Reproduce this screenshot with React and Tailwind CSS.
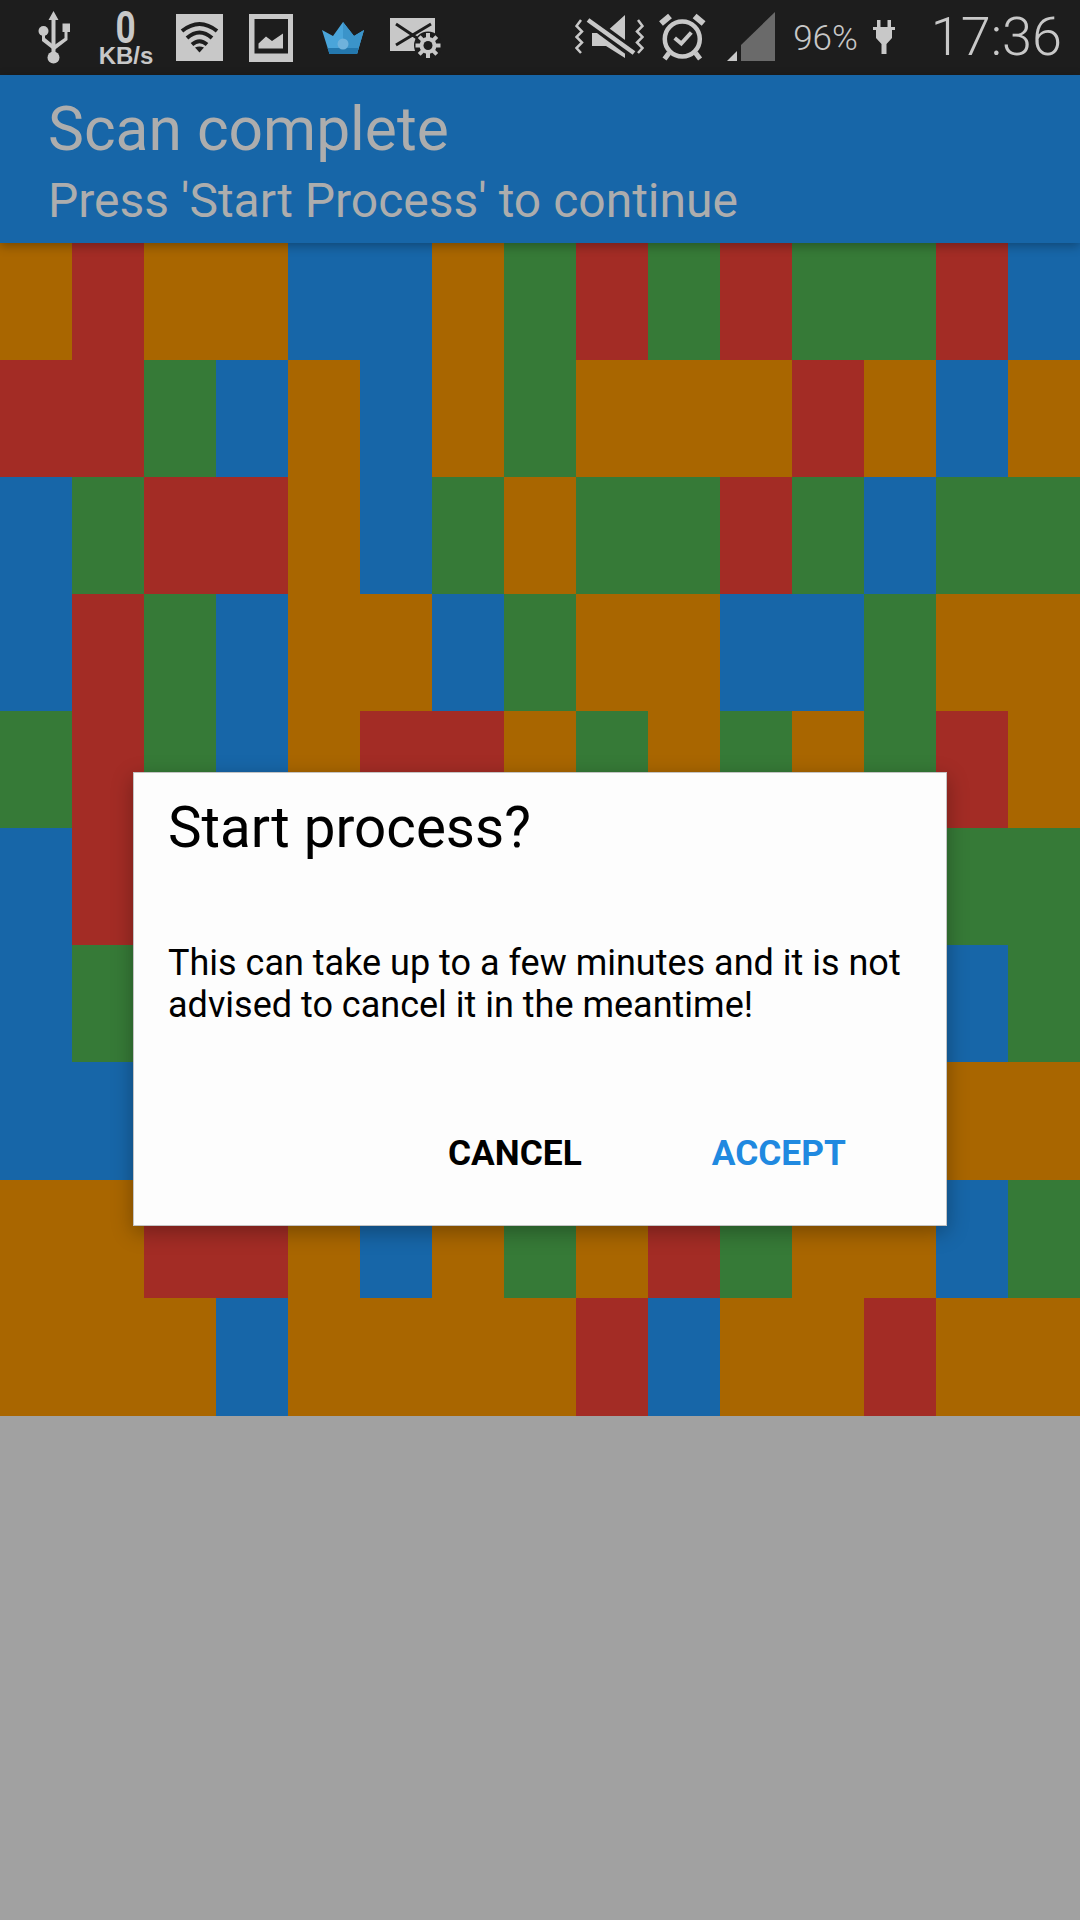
import React from "react";

const ROWS = [
  "OROOBBOGRGRGGRB",
  "RRGBOBOGOOOROBO",
  "BGRROBGOGGRGBGG",
  "BRGBOOBGOOBBGOO",
  "GRGBORROGOGOGRO",
  "BROOOOOOOOOOOGG",
  "BGOOOOOOOOOOOBG",
  "BBOOOOOOOOOOOOO",
  "OORROBOGORGOOBG",
  "OOOBOOOORBOOROO",
];

const CELL = {
  O: "bg-[#a96600]",
  R: "bg-[#a32c25]",
  G: "bg-[#367a37]",
  B: "bg-[#1766a8]",
};

// status bar icons
const UsbIcon = () => (
  <svg width="33" height="53" viewBox="0 0 33 53" className="ml-[38px] mt-[11px] shrink-0" fill="#c8c8c8">
    <path d="M15.500 0l5 9h-3v34h-4V9h-3z" />
    <circle cx="15.500" cy="46.500" r="6" />
    <circle cx="5.500" cy="20" r="5" />
    <rect x="24.500" y="12.500" width="7.500" height="8.500" />
    <path d="M4 24h3v3l8.500 7v5L4 30zM26.500 20h3v9l-13 10v-5l10-7z" />
  </svg>
);

const WifiIcon = () => (
  <svg width="47" height="47" viewBox="0 0 47 47" className="ml-[23px] mt-[14px] shrink-0">
    <rect width="47" height="47" fill="#c8c8c8" />
    <g fill="none" stroke="#1d1d1d" strokeWidth="4">
      <path d="M6 17Q23.500 3 41 17" />
      <path d="M11 24Q23.500 13 36 24" />
      <path d="M16 30.500Q23.500 24 31 30.500" />
    </g>
    <path d="M19 33.500Q23.500 31.500 28 33.500L23.500 38.500z" fill="#1d1d1d" />
  </svg>
);

const PictureIcon = () => (
  <svg width="44" height="48" viewBox="0 0 44 48" className="ml-[26px] mt-[14px] shrink-0">
    <rect width="44" height="48" fill="#c8c8c8" />
    <rect x="5.500" y="5" width="33.500" height="34.500" fill="#1d1d1d" />
    <path d="M9.500 34.500v-5l7.500-7 6 4.500 11-7.500v15z" fill="#c8c8c8" />
  </svg>
);

const CrownIcon = () => (
  <svg width="42" height="32" viewBox="0 0 42 32" className="ml-[29px] mt-[22px] shrink-0">
    <path d="M0 8l11 6L21 0l11 14 10-6-7 24H7.500z" fill="#4aa5da" />
    <path d="M21 0l11 14 10-6-7 24H21z" fill="#3b94ca" />
    <path d="M5.500 26h31L35 32H7.500z" fill="#2478ae" />
    <circle cx="21" cy="22" r="5.500" fill="#6fb2dc" />
  </svg>
);

const MailGearIcon = () => (
  <svg width="51" height="41" viewBox="0 0 51 41" className="ml-[26px] mt-[18px] shrink-0">
    <rect width="45" height="33" fill="#c8c8c8" />
    <path d="M6 6l24 16M41 6L6 27" fill="none" stroke="#1d1d1d" strokeWidth="3" />
    <circle cx="38" cy="27.500" r="14" fill="#1d1d1d" />
    <path
      d="M38 15v25M25.500 27.500h25M29.200 18.700l17.600 17.600M46.800 18.700L29.200 36.300"
      stroke="#c8c8c8"
      strokeWidth="4"
      fill="none"
    />
    <circle cx="38" cy="27.500" r="8.500" fill="#c8c8c8" />
    <circle cx="38" cy="27.500" r="4.500" fill="#1d1d1d" />
  </svg>
);

const MuteVibrateIcon = () => (
  <svg width="69" height="43" viewBox="0 0 69 43" className="shrink-0" fill="none">
    <path d="M17 18h13L50 0v43L31 31H17z" fill="#c8c8c8" />
    <path d="M11 3l50 37" stroke="#1d1d1d" strokeWidth="11" />
    <path d="M13 5l46 33" stroke="#c8c8c8" strokeWidth="4.500" />
    <path d="M6 5L1.500 11 7 16.500 1.500 22 7 27.500 1.500 33 6 38M63 5l4.500 6-5.500 5.500 5.500 5.500-5.500 5.500 5.500 5.500-4.500 5" stroke="#c8c8c8" strokeWidth="2.500" />
  </svg>
);

const AlarmIcon = () => (
  <svg width="48" height="49" viewBox="0 0 48 49" className="shrink-0" fill="none">
    <circle cx="24.300" cy="26" r="17.500" stroke="#c8c8c8" strokeWidth="4.500" />
    <path d="M3 10.500L12 3M45.600 10.500L36.600 3" stroke="#c8c8c8" strokeWidth="6" />
    <path d="M11 40l-4.500 6M37.600 40l4.500 6" stroke="#c8c8c8" strokeWidth="5" />
    <path d="M16.700 25l6.600 5.500 10-11" stroke="#c8c8c8" strokeWidth="4" />
  </svg>
);

const SignalIcon = () => (
  <svg width="48" height="49" viewBox="0 0 48 49" className="ml-[21px] shrink-0">
    <path d="M14 49V33L48 0v49z" fill="#6a6a6a" />
    <path d="M0 49l10-10v10z" fill="#c8c8c8" />
  </svg>
);

const PlugIcon = () => (
  <svg width="22" height="34" viewBox="0 0 22 34" className="shrink-0" fill="#c8c8c8">
    <rect x="4" y="0" width="3.500" height="8" />
    <rect x="14.500" y="0" width="3.500" height="8" />
    <path d="M0 7h22v3h-3v8l-5.500 6v10h-5V24L3 18v-8H0z" />
  </svg>
);

const App = () => {
  return (
    <div className="relative w-[1080px] h-[1920px] overflow-hidden bg-[#a1a1a1] font-['Roboto',sans-serif]">
      {/* Status bar */}
      <div className="h-[75px] bg-[#1d1d1d] flex items-start">
        <UsbIcon />
        <div className="ml-[28px] w-[54px] mt-[9px] flex flex-col items-center text-[#c8c8c8] font-bold shrink-0">
          <span className="text-[44px] leading-[38px] scale-x-80">0</span>
          <span className="font-['Liberation_Sans',sans-serif] text-[24px] leading-[18px]">KB/s</span>
        </div>
        <WifiIcon />
        <PictureIcon />
        <CrownIcon />
        <MailGearIcon />
        <div className="ml-auto flex items-start">
          <div className="mt-[15px] mr-[14px]">
            <MuteVibrateIcon />
          </div>
          <div className="mt-[13px]">
            <AlarmIcon />
          </div>
          <div className="mt-[12px]">
            <SignalIcon />
          </div>
          <span className="ml-[18px] mt-[19px] text-[35px] leading-[40px] text-[#c8c8c8] font-light">96%</span>
          <div className="ml-[15px] mt-[20px]">
            <PlugIcon />
          </div>
          <span className="ml-[36px] mr-[18px] mt-[7px] text-[54px] leading-[60px] text-[#c8c8c8] font-light">17:36</span>
        </div>
      </div>

      {/* Header */}
      <div className="relative z-10 h-[168px] bg-[#1766a8] pl-[48px] pt-[20px] text-[#adadad] shadow-[0_3px_10px_rgba(0,0,0,0.3)]">
        <div className="text-[60.500px] leading-[70px]">Scan complete</div>
        <div className="text-[48px] leading-[56px] mt-[8px]">Press 'Start Process' to continue</div>
      </div>

      {/* Colour grid */}
      <div className="grid grid-cols-15 grid-rows-[repeat(7,117px)_118px_118px_118px]">
        {ROWS.map((row, r) =>
          row.split("").map((c, i) => <div key={`${r}-${i}`} className={CELL[c]} />)
        )}
      </div>

      {/* Dialog */}
      <div className="absolute z-20 left-[133px] top-[772px] w-[814px] h-[454px] bg-[#fdfdfd] border border-[#c4c4c4] shadow-[0_6px_20px_rgba(0,0,0,0.3)] flex flex-col text-black">
        <div className="pl-[34px] pt-[25px] text-[56.500px] leading-[60px]">Start process?</div>
        <div className="pl-[34px] pt-[84px] w-[800px] text-[36px] leading-[42px]">
          This can take up to a few minutes and it is not advised to cancel it in the meantime!
        </div>
        <div className="flex mt-auto pb-[51px] text-[35.300px] leading-[42px] font-bold">
          <span className="ml-[314px]">CANCEL</span>
          <span className="ml-[130px] text-[#2089e0]">ACCEPT</span>
        </div>
      </div>
    </div>
  );
};

export default App;
